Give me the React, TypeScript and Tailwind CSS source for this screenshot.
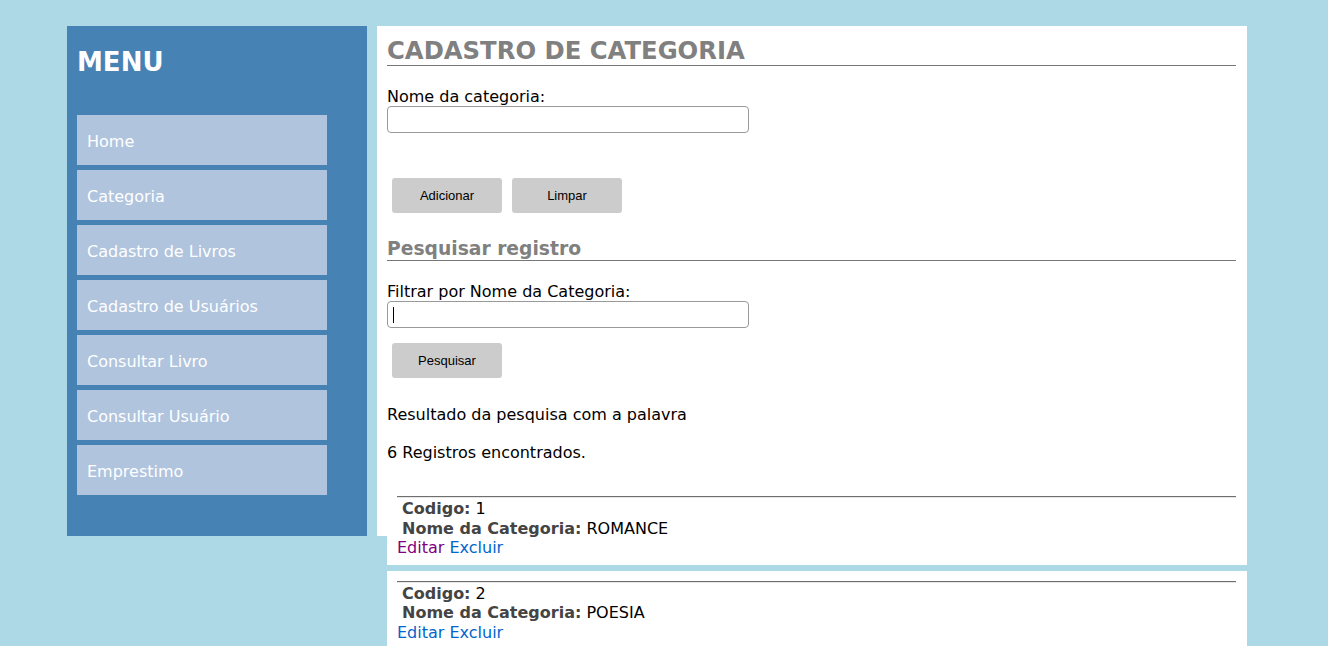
import React from "react";

const menu = [
  "Home",
  "Categoria",
  "Cadastro de Livros",
  "Cadastro de Usuários",
  "Consultar Livro",
  "Consultar Usuário",
  "Emprestimo",
];

function Hr() {
  return <div className="h-[2px] mb-[1px] border-t border-t-[#6f6f6f] border-b border-b-[#e6e6e6]" />;
}

function Item({ code, name, visited }: { code: number; name: string; visited?: boolean }) {
  return (
    <div className="ml-[10px] w-[860px] bg-white pt-[10px] pb-[7px] pl-[10px] pr-[11px] text-[16px] leading-[19.5px]">
      <Hr />
      <div className="pl-[5px] text-black">
        <b className="text-[#444]">Codigo:</b> {code}
      </div>
      <div className="pl-[5px] text-black">
        <b className="text-[#444]">Nome da Categoria:</b> {name}
      </div>
      <div>
        <a className={visited ? "text-[#800080]" : "text-[#0066cc]"}>Editar</a>{" "}
        <a className="text-[#0066cc]">Excluir</a>
      </div>
    </div>
  );
}

export default function App() {
  return (
    <div className="min-h-[646px] bg-[#add8e6] font-['DejaVu_Sans',Verdana,sans-serif] overflow-hidden">
      <div className="flex items-start gap-[10px] pt-[26px] pl-[67px]">
        <aside className="w-[300px] h-[510px] bg-[#4682b4] px-[10px] pt-[10px] shrink-0">
          <h2 className="text-white font-bold text-[26px] leading-[30px] mt-[11px]">MENU</h2>
          <nav className="mt-[38px] flex flex-col gap-[5px]">
            {menu.map((m) => (
              <div
                key={m}
                className="w-[250px] h-[50px] bg-[#b0c4de] text-white text-[16px] flex items-center pl-[10px] pt-[4px]"
              >
                {m}
              </div>
            ))}
          </nav>
        </aside>
        <main className="w-[870px] h-[510px] bg-white shrink-0">
          <div className="pl-[10px] pr-[11px] pt-[11px] text-black">
            <h2 className="text-[#808080] font-bold text-[24.3px] leading-[28px] border-b border-[#777]">
              CADASTRO DE CATEGORIA
            </h2>
            <div className="mt-[21px] text-[16px] leading-[19px]">Nome da categoria:</div>
            <div className="w-[362px] h-[27px] border border-[#999] rounded-[4px]" />
            <div className="mt-[45px] flex gap-[10px] pl-[5px]">
              <button className="w-[110px] h-[35px] bg-[#cccccc] rounded-[3px] text-[13px] font-['Liberation_Sans',Arial,sans-serif] text-black">
                Adicionar
              </button>
              <button className="w-[110px] h-[35px] bg-[#cccccc] rounded-[3px] text-[13px] font-['Liberation_Sans',Arial,sans-serif] text-black">
                Limpar
              </button>
            </div>
            <h3 className="mt-[25px] text-[#808080] font-bold text-[18.72px] leading-[22px] border-b border-[#777]">
              Pesquisar registro
            </h3>
            <div className="mt-[21px] text-[16px] leading-[19px]">Filtrar por Nome da Categoria:</div>
            <div className="w-[362px] h-[27px] border border-[#999] rounded-[4px] flex items-center pl-[5px]">
              <div className="w-[1px] h-[16px] bg-black" />
            </div>
            <div className="mt-[15px] pl-[5px]">
              <button className="w-[110px] h-[35px] bg-[#cccccc] rounded-[3px] text-[13px] font-['Liberation_Sans',Arial,sans-serif] text-black">
                Pesquisar
              </button>
            </div>
            <p className="mt-[27px] text-[16px] leading-[19px]">Resultado da pesquisa com a palavra</p>
            <p className="mt-[19px] text-[16px] leading-[19px]">6 Registros encontrados.</p>
          </div>
          <div className="mt-[24px] flex flex-col gap-[6px]">
            <Item code={1} name="ROMANCE" visited />
            <Item code={2} name="POESIA" />
          </div>
        </main>
      </div>
    </div>
  );
}
